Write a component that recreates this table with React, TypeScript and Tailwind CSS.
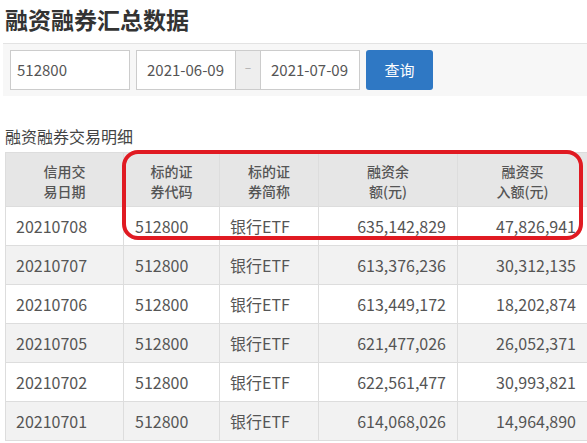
import React from "react";

const rows = [
  ["20210708", "512800", "银行ETF", "635,142,829", "47,826,941"],
  ["20210707", "512800", "银行ETF", "613,376,236", "30,312,135"],
  ["20210706", "512800", "银行ETF", "613,449,172", "18,202,874"],
  ["20210705", "512800", "银行ETF", "621,477,026", "26,052,371"],
  ["20210702", "512800", "银行ETF", "622,561,477", "30,993,821"],
  ["20210701", "512800", "银行ETF", "614,068,026", "14,964,890"],
];

const headers = [
  ["信用交", "易日期"],
  ["标的证", "券代码"],
  ["标的证", "券简称"],
  ["融资余", "额(元)"],
  ["融资买", "入额(元)"],
];

export default function App() {
  return (
    <div
      className="relative w-[587px] h-[443px] overflow-hidden bg-white text-[#555]"
      style={{ fontFamily: '"Noto Sans CJK SC", "Noto Sans", sans-serif' }}
    >
      <div className="h-[43px] flex items-center pl-[5px] pb-[4px] text-[23px] font-bold text-[#333]">
        融资融券汇总数据
      </div>
      <div className="h-[53px] border-t border-[#e3e3e3] bg-[#f7f7f7] ml-[3px] pt-[6px] pl-[7px] flex items-start">
        <div className="w-[120px] h-[40px] border border-[#ccc] bg-white flex items-center pl-[6px] text-[15px] text-[#555]">
          512800
        </div>
        <div className="ml-[6px] flex h-[40px]">
          <div className="w-[100px] h-full border border-[#ccc] bg-white flex items-center pl-[10px] text-[15px] text-[#555]">
            2021-06-09
          </div>
          <div className="w-[24px] h-full border-y border-[#ccc] bg-[#eee] flex items-start justify-center pt-[7px] text-[12px] text-[#aaa]">
            –
          </div>
          <div className="w-[100px] h-full border border-[#ccc] bg-white flex items-center pl-[10px] text-[15px] text-[#555]">
            2021-07-09
          </div>
        </div>
        <div className="ml-[6px] w-[67px] h-[40px] rounded-[3px] bg-[#2f78c4] flex items-center justify-center text-[15px] text-white">
          查询
        </div>
      </div>
      <div className="pl-[5px] pt-[29px] h-[56px] text-[16px] leading-[22px] text-[#444]">
        融资融券交易明细
      </div>
      <div className="ml-[5px] w-[640px] border-l border-t border-[#ddd]">
        <div className="grid grid-cols-[118px_96px_99px_139px_130px_58px] h-[54px] bg-[#e6e6e6]">
          {headers.map((h, i) => (
            <div
              key={i}
              className="border-r border-b border-[#ddd] flex flex-col items-center justify-center text-[14px] leading-[20px] text-[#555] font-medium pt-[2px]"
            >
              <span>{h[0]}</span>
              <span>{h[1]}</span>
            </div>
          ))}
          <div className="border-r border-b border-[#ddd]" />
        </div>
        {rows.map((r, i) => (
          <div
            key={i}
            className={`grid grid-cols-[118px_96px_99px_139px_130px_58px] h-[39px] text-[16px] ${
              i % 2 === 1 ? "bg-[#f2f2f2]" : "bg-white"
            }`}
          >
            <div className="border-r border-b border-[#ddd] flex items-center pl-[10px]">{r[0]}</div>
            <div className="border-r border-b border-[#ddd] flex items-center pl-[11px]">{r[1]}</div>
            <div className="border-r border-b border-[#ddd] flex items-center pl-[10px]">{r[2]}</div>
            <div className="border-r border-b border-[#ddd] flex items-center justify-end pr-[11px]">{r[3]}</div>
            <div className="border-r border-b border-[#ddd] flex items-center justify-end pr-[11px]">{r[4]}</div>
            <div className="border-r border-b border-[#ddd]" />
          </div>
        ))}
      </div>
      <div className="absolute left-[122px] top-[150px] w-[461px] h-[90px] border-[4px] border-[#e01a22] rounded-[16px] pointer-events-none" />
    </div>
  );
}
